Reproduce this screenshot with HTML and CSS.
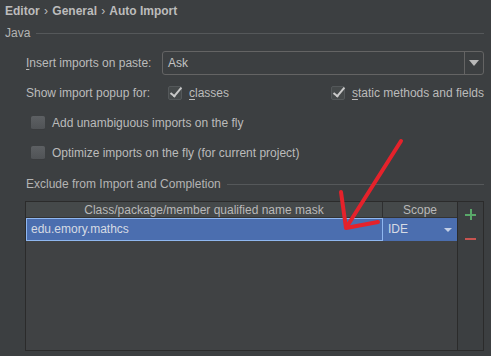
FILE: index.html
```html
<!DOCTYPE html>
<html lang="en">
<head>
  <meta charset="UTF-8">
  <title>Auto Import</title>
  <link rel="stylesheet" href="styles.css">
</head>
<body>
  <div class="page">
    <div class="crumbs">Editor <span class="sep">›</span> General <span class="sep">›</span> Auto Import</div>

    <div class="group-title"><span>Java</span></div>

    <div class="row row-combo">
      <label class="label"><u>I</u>nsert imports on paste:</label>
      <div class="combo">
        <span class="combo-value">Ask</span>
        <span class="combo-btn"><span class="tri"></span></span>
      </div>
    </div>

    <div class="row row-popup">
      <span class="label">Show import popup for:</span>
      <label class="check checked"><span class="box"></span><u>c</u>lasses</label>
      <label class="check checked check-right"><span class="box"></span><u>s</u>tatic methods and fields</label>
    </div>

    <div class="row row-opt">
      <label class="check"><span class="box"></span>Add unambiguous imports on the fly</label>
    </div>
    <div class="row row-opt">
      <label class="check"><span class="box"></span>Optimize imports on the fly (for current project)</label>
    </div>

    <div class="group-title sub"><span>Exclude from Import and Completion</span></div>

    <div class="exclude">
      <div class="table">
        <div class="thead">
          <div class="th col-mask">Class/package/member qualified name mask</div>
          <div class="th col-scope">Scope</div>
        </div>
        <div class="tr selected">
          <div class="td col-mask focused">edu.emory.mathcs</div>
          <div class="td col-scope">IDE <span class="tri small"></span></div>
        </div>
      </div>
      <div class="toolbar">
        <span class="tool plus"></span>
        <span class="tool minus"></span>
      </div>
    </div>
  </div>

  <svg class="scribble" width="491" height="356" viewBox="0 0 491 356">
    <path d="M401 141 L346 228 M341 192 L346 228 L378 222" fill="none" stroke="#e5222b" stroke-width="4" stroke-linecap="round" stroke-linejoin="round"/>
  </svg>
</body>
</html>
```

FILE: styles.css
```css
* {
  margin: 0;
  padding: 0;
  box-sizing: border-box;
}

body {
  background: #3c3f41;
  color: #bbbbbb;
  font-family: "Liberation Sans", Arial, sans-serif;
  font-size: 12px;
  width: 491px;
  height: 356px;
  overflow: hidden;
  position: relative;
}

.page {
  padding: 0 7px 0 5px;
}

u {
  text-decoration-thickness: 1px;
  text-underline-offset: 2px;
}

.crumbs {
  height: 22px;
  line-height: 22px;
  font-size: 12px;
  font-weight: bold;
  color: #bcbcbc;
}

.crumbs .sep {
  font-weight: normal;
  padding: 0 1px;
}

.group-title {
  display: flex;
  align-items: center;
  height: 22px;
  color: #b4b4b4;
}

.group-title::after {
  content: "";
  flex: 1;
  height: 1px;
  background: #55585a;
  margin-left: 6px;
}

.group-title.sub {
  margin: 12px 0 0 21px;
  height: 16px;
}

.row {
  display: flex;
  align-items: center;
  padding-left: 21px;
}

.row-combo {
  margin-top: 7px;
  height: 24px;
}

.label {
  width: 136px;
  flex: none;
}

.combo {
  flex: 1;
  height: 24px;
  display: flex;
  border: 1px solid #646464;
  border-radius: 3px;
  background: #3c3f41;
}

.combo-value {
  flex: 1;
  padding-left: 5px;
  line-height: 22px;
  color: #c4c4c4;
}

.combo-btn {
  width: 19px;
  border-left: 1px solid #646464;
  display: flex;
  align-items: center;
  justify-content: center;
}

.tri {
  display: inline-block;
  width: 0;
  height: 0;
  border-left: 5px solid transparent;
  border-right: 5px solid transparent;
  border-top: 6px solid #b9b9b9;
}

.tri.small {
  border-left-width: 4px;
  border-right-width: 4px;
  border-top-width: 4px;
  border-top-color: #c3cfe6;
  margin-left: auto;
}

.row-popup {
  margin-top: 6px;
  height: 24px;
}

.check {
  display: flex;
  align-items: center;
}

.box {
  width: 14px;
  height: 14px;
  margin-right: 7px;
  border-radius: 2px;
  background: linear-gradient(#5d6063, #505356);
  border-bottom: 1px solid #3a3c3e;
  position: relative;
  flex: none;
}

.checked .box {
  background: #45494a;
  border: 1px solid #54585a;
}

.checked .box::after {
  content: "";
  position: absolute;
  left: 4px;
  top: -2px;
  width: 4px;
  height: 10px;
  border-right: 2px solid #c9c9c9;
  border-bottom: 2px solid #c9c9c9;
  transform: rotate(40deg);
}

.row-popup .check {
  margin-left: 6px;
}

.check-right {
  margin-left: auto !important;
}

.row-opt {
  padding-left: 26px;
  height: 22px;
  margin-top: 7px;
}

.row-opt + .row-opt {
  margin-top: 8px;
}

.exclude {
  display: flex;
  margin: 9px 0 0 20px;
  height: 150px;
  border: 1px solid #2b2b2b;
}

.table {
  flex: 1;
  background: #404244;
}

.thead {
  display: flex;
  height: 16px;
  background: #45494a;
  border-bottom: 1px solid #333;
}

.th {
  text-align: center;
  line-height: 16px;
  color: #b8b8b8;
}

.col-mask {
  width: 357px;
  border-right: 1px solid #2e2f30;
}

.col-scope {
  flex: 1;
}

.tr {
  display: flex;
  height: 23px;
}

.selected {
  background: #4b6eaf;
  color: #d6dbe4;
}

.td {
  line-height: 21px;
  padding-left: 4px;
  display: flex;
  align-items: center;
}

.td.col-scope {
  padding: 0 5px 0 5px;
}

.focused {
  border: 1px solid #8fb7f0;
  padding-left: 4px;
}

.toolbar {
  width: 26px;
  border-left: 1px solid #2b2b2b;
  display: flex;
  flex-direction: column;
  align-items: center;
  padding-top: 7px;
}

.tool.plus {
  width: 11px;
  height: 11px;
  background:
    linear-gradient(#59a869, #59a869) center / 11px 2px no-repeat,
    linear-gradient(#59a869, #59a869) center / 2px 11px no-repeat;
}

.tool.minus {
  width: 11px;
  height: 2px;
  background: #c75450;
  margin-top: 18px;
}

.scribble {
  position: absolute;
  left: 0;
  top: 0;
  pointer-events: none;
}
```
